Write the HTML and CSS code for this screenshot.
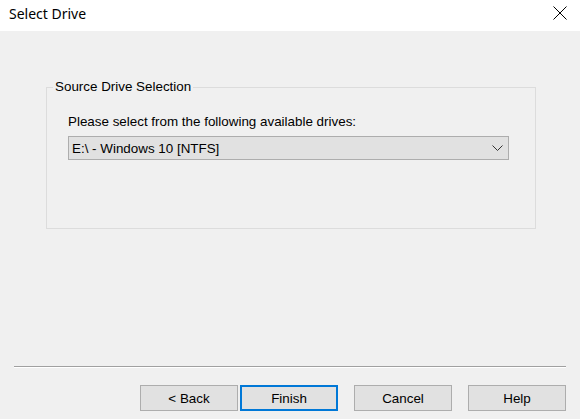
FILE: index.html
```html
<!DOCTYPE html>
<html>
<head>
<meta charset="utf-8">
<link rel="stylesheet" href="styles.css">
</head>
<body>
<div class="dialog">
  <div class="titlebar">
    <span class="title">Select Drive</span>
    <span class="close"><svg width="14" height="14" viewBox="0 0 14 14"><path d="M0.5 0.5 L13.5 13.5 M13.5 0.5 L0.5 13.5" stroke="#000" stroke-width="1" fill="none"/></svg></span>
  </div>
  <div class="content">
    <fieldset class="group">
      <legend class="legend">Source Drive Selection</legend>
      <div class="group-body">
        <div class="label">Please select from the following available drives:</div>
        <div class="combo">
          <span class="combo-text">E:\ - Windows 10 [NTFS]</span>
          <svg class="chevron" width="11" height="6" viewBox="0 0 11 6"><polyline points="0.5,0.5 5.5,5.5 10.5,0.5" stroke="#333" stroke-width="1" fill="none"/></svg>
        </div>
      </div>
    </fieldset>
  </div>
  <div class="footer">
    <div class="separator"></div>
    <div class="buttons">
      <div class="btn">&lt; Back</div>
      <div class="btn btn-default">Finish</div>
      <div class="btn btn-spaced">Cancel</div>
      <div class="btn btn-spaced">Help</div>
    </div>
  </div>
</div>
</body>
</html>
```
FILE: styles.css
```css
html, body {
  margin: 0;
  padding: 0;
  background: #f0f0f0;
}
.dialog {
  width: 580px;
  height: 419px;
  display: flex;
  flex-direction: column;
  font-family: "Liberation Sans", Arial, sans-serif;
  font-size: 13.4px;
  color: #000;
}
.titlebar {
  height: 31px;
  background: #fff;
  display: flex;
  align-items: center;
  justify-content: space-between;
  padding: 0 13px 0 9px;
  box-sizing: border-box;
}
.title {
  font-family: "Noto Sans", "Open Sans", sans-serif;
  font-size: 14px;
  position: relative;
  top: -2px;
}
.close {
  display: flex;
  position: relative;
  top: -3px;
}
.content {
  flex: 1;
  padding: 48px 0 0 46px;
}
.group {
  margin: 0;
  width: 490px;
  height: 150px;
  box-sizing: border-box;
  border: 1px solid #dcdcdc;
  padding: 0 0 0 6px;
  min-width: 0;
}
.legend {
  padding: 0 2px;
  line-height: 16px;
}
.group-body {
  padding-left: 15px;
}
.label {
  margin-top: 19px;
  line-height: 16px;
}
.combo {
  margin-top: 6px;
  width: 441px;
  height: 24px;
  box-sizing: border-box;
  border: 1px solid #adadad;
  background: #e1e1e1;
  display: flex;
  align-items: center;
  justify-content: space-between;
  padding: 0 5px 0 3px;
}
.chevron {
  display: block;
}
.footer {
  padding: 0 14px 8px 14px;
}
.separator {
  border-top: 1px solid #a0a0a0;
  border-bottom: 1px solid #fff;
}
.buttons {
  margin-top: 17px;
  display: flex;
  justify-content: flex-end;
  gap: 2px;
}
.btn {
  width: 98px;
  height: 26px;
  box-sizing: border-box;
  border: 1px solid #adadad;
  background: #e1e1e1;
  display: flex;
  align-items: center;
  justify-content: center;
}
.btn-default {
  border: 2px solid #0078d7;
}
.btn-spaced {
  margin-left: 14px;
}
```
